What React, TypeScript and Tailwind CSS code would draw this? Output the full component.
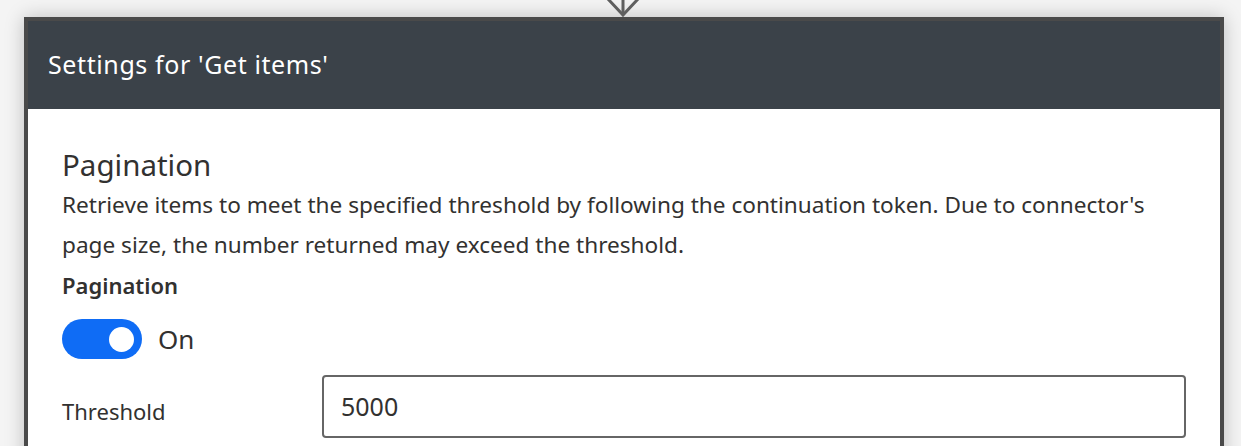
export default function App() {
  return (
    <div
      className="h-[446px] w-[1241px] overflow-hidden bg-[#f4f4f4]"
      style={{ fontFamily: '"Noto Sans", "Segoe UI", sans-serif' }}
    >
      <div className="flex h-[17px] w-[1248px] justify-center">
        <svg width="34" height="17" viewBox="0 0 34 17" className="ml-[-2px]">
          <path d="M2 -1 L17 15 L32 -1" fill="none" stroke="#5f5f5f" strokeWidth="3" />
          <path d="M17 0 L17 13" stroke="#5f5f5f" strokeWidth="3" />
        </svg>
      </div>
      <div className="ml-[24px] w-[1200px] border-[4px] border-b-0 border-[#4a4a4a] bg-white shadow-[0_0_18px_rgba(0,0,0,0.22)]">
        <div className="flex h-[88px] items-center bg-[#3b4249] pl-[20px] text-[25px] tracking-[0.6px] text-white">
          Settings for 'Get items'
        </div>
        <div className="px-[34px] pt-[36px] pb-[40px] text-[#323130]">
          <h2 className="text-[29.5px] leading-[40px]">Pagination</h2>
          <p className="text-[22.6px] leading-[40px]">
            Retrieve items to meet the specified threshold by following the continuation token. Due to connector's
            page size, the number returned may exceed the threshold.
          </p>
          <div className="text-[22px] font-semibold leading-[40px]">Pagination</div>
          <div className="mt-[14px] flex items-center gap-[16px]">
            <div className="flex h-[40px] w-[80px] items-center justify-end rounded-full bg-[#0f6cf5] pr-[8px]">
              <div className="h-[25px] w-[25px] rounded-full bg-white" />
            </div>
            <span className="text-[26px] leading-none">On</span>
          </div>
          <div className="mt-[16px] flex items-center">
            <div className="w-[260px] pt-[9px] text-[22px]">Threshold</div>
            <div className="flex h-[63px] flex-1 items-center rounded-[4px] border-2 border-[#666666] pl-[17px] text-[25px]">
              5000
            </div>
          </div>
          <div className="h-[80px]" />
        </div>
      </div>
    </div>
  );
}
